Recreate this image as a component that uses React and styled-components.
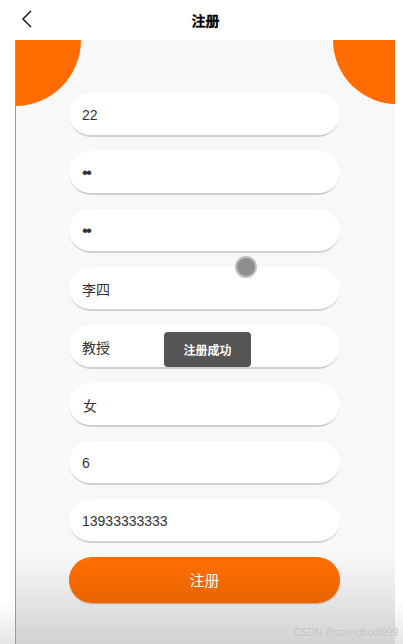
import React from 'react';
import styled, { createGlobalStyle } from 'styled-components';

const GlobalStyle = createGlobalStyle`
  body {
    margin: 0;
    font-family: 'Liberation Sans', 'Noto Sans CJK SC', sans-serif;
    background: #fff;
  }
`;

const fields = [
  { id: 1, value: '22' },
  { id: 2, value: '••', secret: true },
  { id: 3, value: '••', secret: true },
  { id: 4, value: '李四' },
  { id: 5, value: '教授' },
  { id: 6, value: '女', pad: 14 },
  { id: 7, value: '6' },
  { id: 8, value: '13933333333' },
];

function App() {
  return (
    <React.Fragment>
      <GlobalStyle />
      <Page>
        <Header>
          <Back viewBox='0 0 16 20'>
            <path d='M11 2 L3 10 L11 18' />
          </Back>
          <Title>注册</Title>
          <span />
        </Header>
        <Panel>
          <Corner $side='left' />
          <Corner $side='right' />
          <Form>
            {fields.map((item) => (
              <Field key={item.id} $secret={item.secret} $pad={item.pad}>
                {item.value}
              </Field>
            ))}
            <Submit>注册</Submit>
          </Form>
          <Toast>注册成功</Toast>
          <Touch />
        </Panel>
        <Mark>CSDN @springboot999</Mark>
      </Page>
    </React.Fragment>
  );
}

const Page = styled.div`
  position: relative;
  width: 403px;
  height: 644px;
  overflow: hidden;
  background: linear-gradient(to bottom, #fff 0, #fff 600px, #e6e6e6 644px);
`;

const Header = styled.header`
  height: 40px;
  display: grid;
  grid-template-columns: 40px 1fr 40px;
  align-items: center;
  padding: 0 8px 0 12px;
  background: #fff;
`;

const Back = styled.svg`
  width: 16px;
  height: 20px;
  margin: 0 0 3px 8px;
  fill: none;
  stroke: #222;
  stroke-width: 1.6;
`;

const Title = styled.h1`
  margin: 0 0 1px 4px;
  text-align: center;
  font-size: 14px;
  font-weight: 700;
  color: #000;
  -webkit-text-stroke: 0.3px #000;
`;

const Panel = styled.section`
  position: relative;
  margin: 0 8px 0 15px;
  height: 604px;
  border-left: 1px solid #f0803a;
  background: linear-gradient(to bottom, #f8f8f8 0, #f8f8f8 515px, #d2d2d2 604px);
  overflow: hidden;
`;

const Corner = styled.div`
  position: absolute;
  ${(p) =>
    p.$side === 'left'
      ? 'left: -67px; top: -66px; width: 132px; height: 132px;'
      : 'right: -66px; top: -64px; width: 128px; height: 128px;'}
  border-radius: 50%;
  background: #ff6d00;
`;

const Form = styled.div`
  position: relative;
  display: flex;
  flex-direction: column;
  gap: 14px;
  width: 271px;
  padding: 53px 0 0 53px;
`;

const Field = styled.div`
  height: 40px;
  display: flex;
  align-items: center;
  padding: 2px 0 0 ${(p) => p.$pad || 13}px;
  border-radius: 22px;
  background: #fff;
  border-bottom: 2px solid #cfcfcf;
  color: #333;
  font-size: ${(p) => (p.$secret ? 17 : 14)}px;
  letter-spacing: ${(p) => (p.$secret ? '-2px' : '0')};
`;

const Submit = styled.button`
  height: 46px;
  border: none;
  border-radius: 23px;
  background: linear-gradient(to bottom, #ff6f00, #e86300);
  color: #fff;
  font-family: inherit;
  font-size: 15px;
  padding-bottom: 2px;
  box-shadow: 0 1px 1px rgba(160, 70, 0, 0.4);
`;

const Toast = styled.div`
  position: absolute;
  left: 148px;
  top: 292px;
  width: 87px;
  height: 35px;
  display: flex;
  align-items: center;
  justify-content: center;
  border-radius: 4px;
  background: #555;
  color: #fff;
  font-size: 12px;
  font-weight: 700;
`;

const Touch = styled.div`
  position: absolute;
  left: 219px;
  top: 216px;
  width: 18px;
  height: 18px;
  border-radius: 50%;
  background: #8e8e8e;
  border: 2px solid #bdbdbd;
`;

const Mark = styled.div`
  position: absolute;
  right: 5px;
  bottom: 6px;
  font-size: 10px;
  color: #b8b8b8;
  text-shadow: 0 0 1px #fff;
`;

export default App;
